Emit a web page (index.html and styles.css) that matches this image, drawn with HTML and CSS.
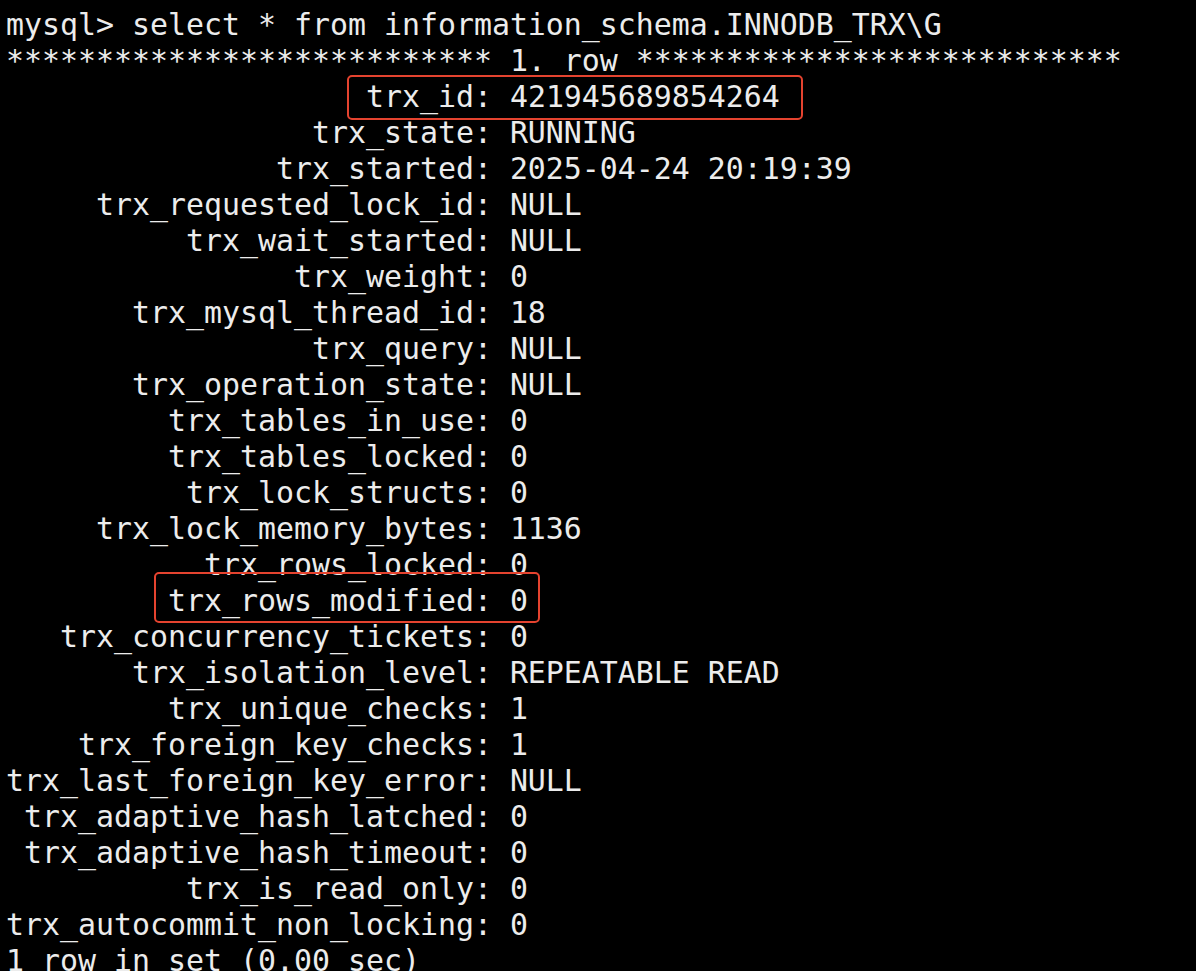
FILE: index.html
```html
<!DOCTYPE html>
<html>
<head>
<meta charset="utf-8">
<link rel="stylesheet" href="styles.css">
</head>
<body>
<pre class="term">mysql&gt; select * from information_schema.INNODB_TRX\G
*************************** 1. row ***************************
                    <span class="hl hl-id">trx_id: 421945689854264</span>
                 trx_state: RUNNING
               trx_started: 2025-04-24 20:19:39
     trx_requested_lock_id: NULL
          trx_wait_started: NULL
                trx_weight: 0
       trx_mysql_thread_id: 18
                 trx_query: NULL
       trx_operation_state: NULL
         trx_tables_in_use: 0
         trx_tables_locked: 0
          trx_lock_structs: 0
     trx_lock_memory_bytes: 1136
           trx_rows_locked: 0
         <span class="hl hl-mod">trx_rows_modified: 0</span>
   trx_concurrency_tickets: 0
       trx_isolation_level: REPEATABLE READ
         trx_unique_checks: 1
    trx_foreign_key_checks: 1
trx_last_foreign_key_error: NULL
 trx_adaptive_hash_latched: 0
 trx_adaptive_hash_timeout: 0
          trx_is_read_only: 0
trx_autocommit_non_locking: 0
1 row in set (0.00 sec)
</pre>
</body>
</html>
```
FILE: styles.css
```css
html, body {
  margin: 0;
  background: #000;
}
body {
  padding: 7px 0 0 6px;
  overflow: hidden;
  height: 971px;
  box-sizing: border-box;
}
.term {
  margin: 0;
  font-family: "DejaVu Sans Mono", "Liberation Mono", monospace;
  font-size: 29.9px;
  line-height: 36px;
  color: #ececec;
}
.hl {
  display: inline-block;
  position: relative;
  height: 36px;
  vertical-align: top;
}
.hl::after {
  content: "";
  position: absolute;
  border: 2px solid #e5432f;
  border-radius: 5px;
}
.hl-id::after {
  left: -19px;
  right: -23px;
  top: -4px;
  bottom: -5px;
}
.hl-mod::after {
  left: -14px;
  right: -12px;
  top: -11px;
  bottom: -4px;
}
```
